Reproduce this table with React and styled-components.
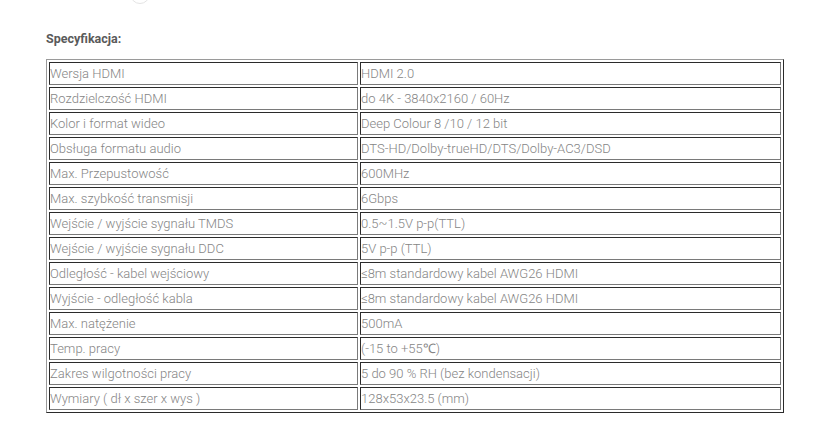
import { styled, createGlobalStyle } from 'styled-components'

const GlobalStyle = createGlobalStyle`
  html, body {
    margin: 0;
    padding: 0;
    background: #fff;
  }
`

const specs = [
  ['Wersja HDMI', 'HDMI 2.0'],
  ['Rozdzielczość HDMI', 'do 4K - 3840x2160 / 60Hz'],
  ['Kolor i format wideo', 'Deep Colour 8 /10 / 12 bit'],
  ['Obsługa formatu audio', 'DTS-HD/Dolby-trueHD/DTS/Dolby-AC3/DSD'],
  ['Max. Przepustowość', '600MHz'],
  ['Max. szybkość transmisji', '6Gbps'],
  ['Wejście / wyjście sygnału TMDS', '0.5~1.5V p-p(TTL)'],
  ['Wejście / wyjście sygnału DDC', '5V p-p (TTL)'],
  ['Odległość - kabel wejściowy', '≤8m standardowy kabel AWG26 HDMI'],
  ['Wyjście - odległość kabla', '≤8m standardowy kabel AWG26 HDMI'],
  ['Max. natężenie', '500mA'],
  ['Temp. pracy', '(-15 to +55℃)'],
  ['Zakres wilgotności pracy', '5 do 90 % RH (bez kondensacji)'],
  ['Wymiary ( dł x szer x wys )', '128x53x23.5 (mm)'],
]

const App = () => {
  return (
    <Wrapper>
      <GlobalStyle />
      <Ring />
      <Heading>Specyfikacja:</Heading>
      <SpecTable>
        <tbody>
          {specs.map(([name, value]) => (
            <tr key={name}>
              <Cell $first>{name}</Cell>
              <Cell>{value}</Cell>
            </tr>
          ))}
        </tbody>
      </SpecTable>
    </Wrapper>
  )
}

const Wrapper = styled.div`
  padding: 0 46px 0 46px;
  font-family: Roboto, 'Liberation Sans', sans-serif;
  overflow: hidden;
  height: 443px;
  box-sizing: border-box;
`

const Ring = styled.div`
  width: 18px;
  height: 18px;
  margin: -16px 0 0 84px;
  border: 1px solid #e4e4e4;
  border-radius: 50%;
`

const Heading = styled.h4`
  margin: 27px 0 12px 0;
  font-size: 12.5px;
  font-weight: 700;
  color: #5a5a5a;
  line-height: 16px;
`

const SpecTable = styled.table`
  width: 738px;
  border-collapse: separate;
  border-spacing: 2px;
  border: 1px solid;
  border-color: #9a9a9a #2b2b2b #2b2b2b #9a9a9a;
`

const Cell = styled.td`
  width: ${(p) => (p.$first ? '307px' : 'auto')};
  height: 21px;
  padding: 0 0 0 0;
  border: 1px solid;
  border-color: #2b2b2b #7a7a7a #7a7a7a #2b2b2b;
  font-size: 13px;
  font-weight: 300;
  color: #858585;
  line-height: 21px;
  white-space: nowrap;
`

export default App
